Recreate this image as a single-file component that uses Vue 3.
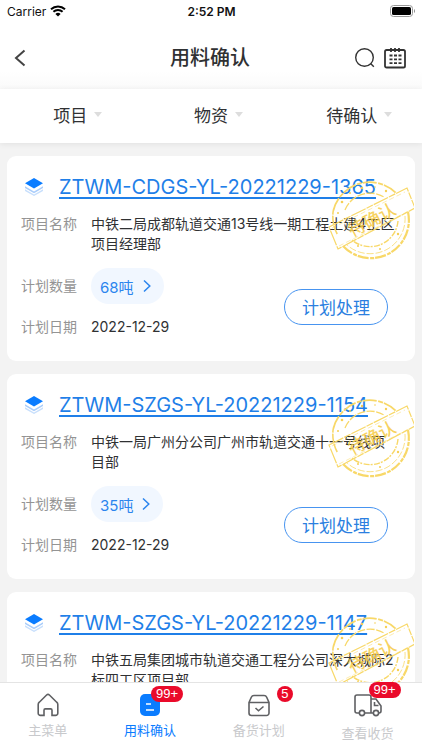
<template>
  <div class="page">
    <header class="header">
      <div class="status-bar">
        <div class="carrier">
          <span>Carrier</span>
          <svg class="wifi" viewBox="0 0 16 12">
            <path d="M1 4.3a10.2 10.2 0 0 1 14 0" />
            <path d="M3.4 6.8a6.8 6.8 0 0 1 9.2 0" />
            <path class="wifi-dot" d="M5.4 8.900a3.800 3.800 0 0 1 5.200 0L8 11.600z" />
          </svg>
        </div>
        <div class="time">2:52 PM</div>
        <div class="power">
          <svg class="battery" viewBox="0 0 26 12">
            <rect x="0.5" y="0.5" width="22" height="11" rx="3" fill="#fff" stroke="#999" />
            <rect x="2" y="2" width="19" height="8" rx="1.6" fill="#000" />
            <path d="M24 4v4c1.300-.5 1.300-3.500 0-4z" fill="#888" />
          </svg>
        </div>
      </div>
      <div class="nav-bar">
        <button class="icon-btn" aria-label="返回">
          <svg class="back" viewBox="0 0 12 18"><path d="M10.500 1.500L2 9l8.500 7.500" /></svg>
        </button>
        <h1 class="nav-title">用料确认</h1>
        <div class="nav-actions">
          <button class="icon-btn" aria-label="搜索">
            <svg class="search" viewBox="0 0 22 22">
              <circle cx="10.500" cy="10.500" r="8.800" />
              <path d="M16.800 16.800l3 3" />
            </svg>
          </button>
          <button class="icon-btn" aria-label="日历">
            <svg class="calendar" viewBox="0 0 22 22">
              <rect x="1" y="3" width="20" height="17.500" rx="1.600" />
              <path d="M7 1v4M11 1v4M15 1v4" />
              <path class="dots" d="M5.500 8.500h12M5.500 12.300h12M5.500 16.100h12" />
            </svg>
          </button>
        </div>
      </div>
    </header>

    <div class="filter-bar">
      <button v-for="f in filters" :key="f" class="filter-item">
        <span>{{ f }}</span>
        <i class="caret"></i>
      </button>
    </div>

    <main class="list">
      <article v-for="item in plans" :key="item.code" class="card">
        <div class="card-head">
          <svg class="layers" viewBox="0 0 18 18">
            <path d="M9 0l9 5.200-9 5.200-9-5.200z" fill="#0a7cff" />
            <path d="M0 8.300l9 5.100 9-5.100v1.800l-9 5.100-9-5.100z" fill="#a9cdfb" />
            <path d="M0 11.300l9 5.100 9-5.100v1.600L9 18l-9-5.100z" fill="#c8dffc" />
          </svg>
          <a class="code" href="#">{{ item.code }}</a>
        </div>
        <div class="row">
          <span class="label">项目名称</span>
          <span class="value">{{ item.project }}</span>
        </div>
        <div v-if="item.amount" class="card-foot">
          <div class="foot-info">
            <div class="row row-amount">
              <span class="label">计划数量</span>
              <button class="amount">
                <span>{{ item.amount }}</span>
                <svg class="arrow" viewBox="0 0 8 14"><path d="M1 1.500L6.800 7 1 12.500" /></svg>
              </button>
            </div>
            <div class="row">
              <span class="label">计划日期</span>
              <span class="value">{{ item.date }}</span>
            </div>
          </div>
          <button class="handle-btn">计划处理</button>
        </div>
        <svg class="stamp" viewBox="0 0 86 80">
          <g fill="none" stroke="#f8d868">
            <path d="M9.200 54A37 37 0 0 1 5.200 31" stroke-width="1.600" stroke-dasharray="9 1" />
            <path d="M5.200 31A37.500 37.500 0 0 1 68 13" stroke-width="1.800" stroke-dasharray="14 1.500 5 1" />
            <path d="M80 32A38 38 0 0 1 15 66" stroke-width="2.200" stroke-dasharray="11 1 4 1.500" />
            <path d="M77 36A35 35 0 0 1 19 65" stroke-width="0.800" stroke-dasharray="7 2" />
            <path d="M17 30A27 27 0 0 1 56 17" stroke-width="1.300" stroke-dasharray="8 1.500" />
            <path d="M70 41A28 28 0 0 1 24 60" stroke-width="1.400" stroke-dasharray="6 1.500 2 1" />
            <path d="M1 47L79 8l8 20L10 69z" stroke-width="1.200" stroke-dasharray="16 1 7 1" />
            <path d="M4 48L77 12M11 66l72-36" stroke-width="0.500" stroke-dasharray="5 3" />
          </g>
          <g fill="#f6cf55">
            <circle cx="14" cy="22" r="1.300" />
            <circle cx="22" cy="13" r="1" />
            <circle cx="34" cy="8" r="1.200" />
            <circle cx="10" cy="33" r="1" />
            <circle cx="58" cy="11" r="1.200" />
            <circle cx="47" cy="7" r="0.800" />
            <circle cx="30" cy="66" r="1" />
            <circle cx="52" cy="69" r="1" />
            <circle cx="70" cy="54" r="1.200" />
          </g>
          <text class="stamp-text" x="44" y="46" transform="rotate(-28 44 40)">待确认</text>
        </svg>
      </article>
    </main>

    <nav class="tab-bar">
      <a class="tab" href="#">
        <span class="tab-icon">
          <svg class="icon-md" viewBox="0 0 22 24">
            <path d="M1.200 11.500c0-1 .4-1.700 1.100-2.300L9.600 2a2 2 0 0 1 2.800 0l7.300 7.200c.7.600 1.100 1.300 1.100 2.300v8.700a2.200 2.200 0 0 1-2.200 2.200H15v-5.200a1.300 1.300 0 0 0-1.300-1.300H8.300A1.300 1.300 0 0 0 7 17.200v5.200H3.400a2.200 2.200 0 0 1-2.200-2.200z" />
          </svg>
        </span>
        <span>主菜单</span>
      </a>
      <a class="tab active" href="#">
        <span class="tab-icon">
          <svg class="icon-md" viewBox="0 0 22 24">
            <path class="solid" d="M6 1h7l8 7v10a5 5 0 0 1-5 5H6a5 5 0 0 1-5-5V6a5 5 0 0 1 5-5z" />
            <path class="lines" d="M7 11h5M7 17h8" />
          </svg>
          <em class="badge">99+</em>
        </span>
        <span>用料确认</span>
      </a>
      <a class="tab" href="#">
        <span class="tab-icon">
          <svg class="icon-md" viewBox="0 0 22 24">
            <path d="M1 9.500l2.300-5.200A3 3 0 0 1 6 2.500h10a3 3 0 0 1 2.700 1.800L21 9.500V20a2.500 2.500 0 0 1-2.500 2.500h-15A2.500 2.500 0 0 1 1 20zM1 9.500h20M7.500 15l3 2.800 5-4.300" />
          </svg>
          <em class="badge badge-round">5</em>
        </span>
        <span>备货计划</span>
      </a>
      <a class="tab" href="#">
        <span class="tab-icon tall">
          <svg class="icon-lg" viewBox="0 0 28 24">
            <path d="M5.500 20H3a2 2 0 0 1-2-2V4a2 2 0 0 1 2-2h12a2 2 0 0 1 2 2v16h-6.500M17 6h5l5 7v5a2 2 0 0 1-2 2M17 20h2M20.500 9v3.500h4" />
            <circle cx="8" cy="20" r="2.600" />
            <circle cx="22" cy="20" r="2.600" />
          </svg>
          <em class="badge badge-top">99+</em>
        </span>
        <span>查看收货</span>
      </a>
    </nav>
  </div>
</template>

<script setup>
const filters = ['项目', '物资', '待确认']

const plans = [
  {
    code: 'ZTWM-CDGS-YL-20221229-1365',
    project: '中铁二局成都轨道交通13号线一期工程土建4工区项目经理部',
    amount: '68吨',
    date: '2022-12-29'
  },
  {
    code: 'ZTWM-SZGS-YL-20221229-1154',
    project: '中铁一局广州分公司广州市轨道交通十一号线项目部',
    amount: '35吨',
    date: '2022-12-29'
  },
  {
    code: 'ZTWM-SZGS-YL-20221229-1147',
    project: '中铁五局集团城市轨道交通工程分公司深大城际2标四工区项目部'
  }
]
</script>

<style>
body {
  background: #f3f3f3;
}
</style>

<style scoped>
.page {
  height: 100vh;
  display: flex;
  flex-direction: column;
  background: #f3f3f3;
  color: #303133;
  font-family: Inter, 'Noto Sans CJK SC', sans-serif;
}
button {
  padding: 0;
  border: none;
  background: none;
  color: inherit;
  font-family: inherit;
  cursor: pointer;
}
a {
  color: inherit;
}
svg {
  display: block;
  fill: none;
}
.header {
  background: linear-gradient(180deg, #fff 80%, #fafafa 100%);
}
.status-bar {
  display: grid;
  grid-template-columns: 1fr auto 1fr;
  align-items: center;
  height: 22px;
  padding: 0 6px 0 7px;
  color: #111;
  font-size: 12px;
}
.carrier {
  display: flex;
  align-items: center;
  gap: 4px;
}
.wifi {
  width: 16px;
  height: 12px;
  stroke: #000;
  stroke-width: 2;
}
.wifi-dot {
  fill: #000;
  stroke: none;
}
.time {
  font-weight: 600;
}
.power {
  display: flex;
  justify-content: flex-end;
}
.battery {
  width: 26px;
  height: 12px;
}
.nav-bar {
  display: grid;
  grid-template-columns: 1fr auto 1fr;
  align-items: center;
  height: 63px;
  padding: 4px 16px 0 14px;
}
.icon-btn {
  display: block;
  justify-self: start;
}
.back {
  width: 12px;
  height: 18px;
  stroke: #444;
  stroke-width: 2;
}
.nav-title {
  margin: 0;
  font-size: 20px;
  font-weight: 500;
  line-height: 28px;
}
.nav-actions {
  display: flex;
  justify-content: flex-end;
  gap: 8px;
}
.search,
.calendar {
  width: 22px;
  height: 22px;
  stroke: #333;
  stroke-width: 1.4;
}
.calendar {
  stroke-width: 1.8;
}
.dots {
  stroke-dasharray: 3 1.5;
}
.filter-bar {
  display: grid;
  grid-template-columns: repeat(3, 1fr);
  height: 50px;
  padding-bottom: 4px;
  background: #fff;
  box-shadow: 0 1px 6px rgba(0, 0, 0, 0.08);
}
.filter-item {
  display: flex;
  align-items: center;
  justify-content: center;
  gap: 7px;
  padding-left: 15px;
  font-size: 17px;
}
.caret {
  border: 4px solid transparent;
  border-top: 5px solid #ddd;
  border-bottom: none;
}
.list {
  flex: 1;
  min-height: 0;
  display: flex;
  flex-direction: column;
  gap: 13px;
  padding: 13px 7px;
  overflow: hidden auto;
  scrollbar-width: none;
}
.card {
  position: relative;
  flex: none;
  padding: 18px 14px 16px;
  border-radius: 9px;
  background: #fff;
}
.card-head {
  display: flex;
  align-items: center;
  gap: 16px;
  height: 26px;
  margin-bottom: 14px;
  padding-left: 4px;
}
.layers {
  width: 18px;
  height: 18px;
}
.code {
  color: #1f7fe8;
  font-size: 20px;
  line-height: 26px;
  text-decoration: underline;
  text-underline-offset: 3px;
  white-space: nowrap;
}
.row {
  display: flex;
  gap: 14px;
  font-size: 14px;
  line-height: 20px;
}
.label {
  flex: none;
  color: #949494;
}
.value {
  padding-right: 4px;
}
.card-foot {
  display: flex;
  align-items: center;
  justify-content: space-between;
  margin-top: 14px;
  padding-right: 13px;
}
.foot-info {
  padding-bottom: 8px;
}
.row-amount {
  align-items: center;
  margin-bottom: 13px;
}
.amount {
  display: flex;
  align-items: center;
  gap: 9px;
  height: 36px;
  padding: 0 13px 0 9px;
  border-radius: 18px;
  background: #f1f7ff;
  color: #2b85ee;
  font-size: 15px;
}
.arrow {
  width: 8px;
  height: 14px;
  stroke: #2b85ee;
  stroke-width: 1.5;
}
.handle-btn {
  height: 36px;
  padding: 0 17px;
  border: 1px solid #4794f0;
  border-radius: 18px;
  color: #2b7fe0;
  font-size: 17px;
}
.stamp {
  position: absolute;
  top: 24px;
  right: 1px;
  width: 86px;
  height: 80px;
  pointer-events: none;
}
.stamp-text {
  fill: #f6cb45;
  font-size: 17px;
  font-weight: 500;
  text-anchor: middle;
  opacity: 0.85;
}
.tab-bar {
  position: relative;
  display: flex;
  justify-content: space-around;
  height: 57px;
  padding-top: 10px;
  border-top: 1px solid #e4e4e4;
  background: #fff;
}
.tab {
  display: flex;
  flex-direction: column;
  align-items: center;
  color: #c8c9cc;
  font-size: 13px;
  line-height: 18px;
  text-decoration: none;
}
.tab.active {
  color: #0a7cff;
}
.tab-icon {
  position: relative;
  height: 28px;
}
.tab-icon.tall {
  height: 31px;
}
.icon-md,
.icon-lg {
  width: 22px;
  height: 24px;
  stroke: #5f6063;
  stroke-width: 1.6;
}
.icon-lg {
  width: 28px;
}
.active .solid {
  fill: #0a7cff;
  stroke: none;
}
.active .lines {
  stroke: #fff;
  stroke-width: 1.6;
}
.badge {
  position: absolute;
  top: -7px;
  left: 12px;
  min-width: 16px;
  padding: 0 5px;
  border-radius: 8px;
  background: #ea0a2a;
  color: #fff;
  box-sizing: border-box;
  font-family: 'Liberation Sans', sans-serif;
  font-size: 13px;
  font-style: normal;
  line-height: 16px;
  text-align: center;
}
.badge-round {
  left: 29px;
  padding: 0;
}
.badge-top {
  top: -11px;
  left: 15px;
}
</style>
